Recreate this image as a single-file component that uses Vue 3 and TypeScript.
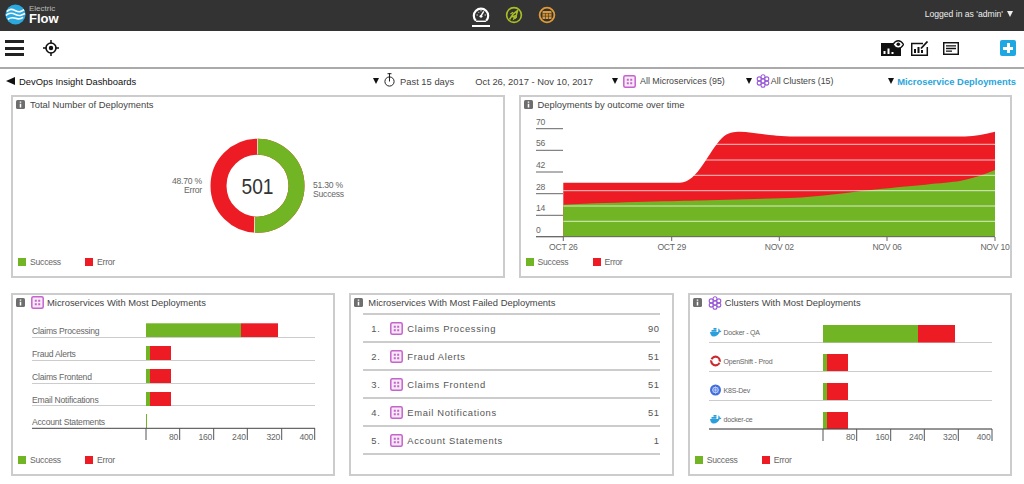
<script setup lang="ts">
interface BarRow { label: string; y0: number; y1: number; g: number; r: number; line: number; labelY: number; icon?: string }

const legendItems = [
  { name: 'Success', cls: 'ok' },
  { name: 'Error', cls: 'err' },
]

const yTicks = [
  { v: '70', y: 128.7 }, { v: '56', y: 150.3 }, { v: '42', y: 172 },
  { v: '28', y: 193.7 }, { v: '14', y: 215.3 }, { v: '0', y: 236.7 },
]
const gridY = [144.3, 160, 175.3, 190.7, 206, 221.3]
const xTicks = [
  { t: 'OCT 26', x: 563.3 }, { t: 'OCT 29', x: 671.7 }, { t: 'NOV 02', x: 779.3 },
  { t: 'NOV 06', x: 887 }, { t: 'NOV 10', x: 995 },
]

const msRows: BarRow[] = [
  { label: 'Claims Processing', y0: 323.3, y1: 337, g: 241, r: 278, line: 337.5, labelY: 334 },
  { label: 'Fraud Alerts', y0: 346, y1: 360, g: 150, r: 171, line: 360.5, labelY: 357 },
  { label: 'Claims Frontend', y0: 369, y1: 383, g: 150, r: 171, line: 383.5, labelY: 380 },
  { label: 'Email Notifications', y0: 392, y1: 406, g: 150, r: 171, line: 405.5, labelY: 403 },
]
const msTicks = [
  { t: '', x: 146 }, { t: '80', x: 179.7 }, { t: '160', x: 213.7 },
  { t: '240', x: 247.3 }, { t: '320', x: 281.7 }, { t: '400', x: 314.7 },
]
const clRows: BarRow[] = [
  { label: 'Docker - QA', y0: 325, y1: 342.5, g: 918, r: 955, line: 342.5, labelY: 334.5, icon: 'docker' },
  { label: 'OpenShift - Prod', y0: 354, y1: 371, g: 827, r: 848, line: 371.5, labelY: 363.5, icon: 'openshift' },
  { label: 'K8S-Dev', y0: 383, y1: 400, g: 827, r: 848, line: 400.5, labelY: 392.5, icon: 'k8s' },
  { label: 'docker-ce', y0: 412, y1: 429, g: 827, r: 848, line: 429, labelY: 421.5, icon: 'docker' },
]
const clTicks = [
  { t: '', x: 823 }, { t: '80', x: 856.7 }, { t: '160', x: 890.7 },
  { t: '240', x: 924.3 }, { t: '320', x: 958.3 }, { t: '400', x: 992 },
]
const failed = [
  { n: 1, name: 'Claims Processing', v: 90 },
  { n: 2, name: 'Fraud Alerts', v: 51 },
  { n: 3, name: 'Claims Frontend', v: 51 },
  { n: 4, name: 'Email Notifications', v: 51 },
  { n: 5, name: 'Account Statements', v: 1 },
]
</script>

<template>
  <div class="page">
    <header class="topbar">
      <div class="brand">
        <svg class="logo" viewBox="0 0 22 22" width="21" height="21">
          <circle cx="11" cy="11" r="10.5" fill="#29a9e0" />
          <path d="M2 8c3-3 5-3 9-1s6 1 9-1M1 12c3-3 6-3 10-1s6 1 10-1M3 16c3-2 5-2 8-1s5 1 8-1" fill="none" stroke="#fff" stroke-width="1.7" />
        </svg>
        <div class="brand-text"><span class="b1">Electric</span><span class="b2">Flow</span></div>
      </div>
      <nav class="nav">
        <div class="nav-item active">
          <svg viewBox="0 0 20 20" width="18" height="18">
            <path d="M4.300 16.500a8 8 0 1 1 11.400 0" fill="none" stroke="#fff" stroke-width="2.400" />
            <path d="M4.500 17h11" stroke="#fff" stroke-width="1.600" />
            <path d="M10 11l3-5" stroke="#fff" stroke-width="1.600" />
            <circle cx="10" cy="11.500" r="1.600" fill="#fff" />
            <path d="M5 10h1.500M14 10h1.500M6.800 6.500l1 1M10 4.500v1.500" stroke="#fff" stroke-width="1" />
          </svg>
        </div>
        <div class="nav-item">
          <svg viewBox="0 0 20 20" width="18" height="18">
            <circle cx="10" cy="10" r="8.200" fill="none" stroke="#a9bf22" stroke-width="1.800" />
            <path d="M5 15L9 9l5-4-1.500 5.500L8 12l3-1-1 3 3-2" fill="none" stroke="#a9bf22" stroke-width="1.700" />
            <path d="M6 9l3-2M11 14l2-3" stroke="#a9bf22" stroke-width="1.300" />
          </svg>
        </div>
        <div class="nav-item">
          <svg viewBox="0 0 20 20" width="18" height="18">
            <circle cx="10" cy="10" r="8.200" fill="none" stroke="#de9a36" stroke-width="2" />
            <rect x="5" y="5.500" width="10" height="9" rx="1" fill="#de9a36" />
            <path d="M5 8.500h10M5 11.300h10M8.300 8v6.500M11.700 8v6.500" stroke="#333" stroke-width=".7" />
          </svg>
        </div>
      </nav>
      <div class="user">Logged in as 'admin' <span class="user-caret"></span></div>
    </header>

    <div class="toolbar">
      <div class="hamb"><span></span><span></span><span></span></div>
      <svg class="target" viewBox="0 0 16 16" width="16" height="16">
        <circle cx="8" cy="8" r="5" fill="none" stroke="#111" stroke-width="1.600" />
        <circle cx="8" cy="8" r="2.200" fill="#111" />
        <path d="M8 0v3.500M8 12.500V16M0 8h3.500M12.500 8H16" stroke="#111" stroke-width="1.500" />
      </svg>
      <div class="tools">
        <svg class="t1" viewBox="0 0 23 16" width="23" height="16">
          <rect x="0" y="3" width="20" height="13" fill="#111" />
          <path d="M3.500 14v-3M7.500 14V8.500M11.500 14v-2" stroke="#fff" stroke-width="2" />
          <path d="M12 4.500c3-5 7.500-5 10.500 0-3 5-7.500 5-10.500 0z" fill="#fff" stroke="#111" stroke-width="1.300" />
          <circle cx="17.300" cy="4.300" r="1.800" fill="#111" />
        </svg>
        <svg class="t2" viewBox="0 0 18 15" width="18" height="15">
          <path d="M12 2.500H.7v11.800h15.600V6" fill="none" stroke="#111" stroke-width="1.500" />
          <path d="M4 12V8M7.500 12V6M11 12V9" stroke="#111" stroke-width="2" />
          <path d="M10 7.500L16.500.5" stroke="#111" stroke-width="1.800" />
        </svg>
        <svg class="t3" viewBox="0 0 16 13" width="16" height="13">
          <rect x=".7" y=".7" width="14.600" height="11.600" fill="none" stroke="#111" stroke-width="1.500" />
          <path d="M3 3.800h10M3 6.500h10M3 9.200h6" stroke="#111" stroke-width="1.300" />
        </svg>
        <div class="plus"><span class="ph"></span><span class="pv"></span></div>
      </div>
    </div>

    <div class="crumbs">
      <div class="back"><span class="tri-left"></span>DevOps Insight Dashboards</div>
      <div class="filters">
        <span class="caret"></span>
        <svg class="watch" viewBox="0 0 11 14" width="11" height="14">
          <circle cx="5.500" cy="8.500" r="4.600" fill="none" stroke="#222" stroke-width="1" />
          <path d="M5.500 0v8.500M3.500 .7h4" stroke="#222" stroke-width="1" />
        </svg>
        <span class="ftext past">Past 15 days</span>
        <span class="ftext date">Oct 26, 2017 - Nov 10, 2017</span>
        <span class="caret c2"></span>
        <svg class="ms-ico" viewBox="0 0 13 13" width="13" height="13">
          <rect x=".8" y=".8" width="11.400" height="11.400" rx="1.500" fill="#f7e9f8" stroke="#c564cb" stroke-width="1.500" />
          <path d="M3.800 3.800h2v2h-2zM7.200 3.800h2v2h-2zM3.800 7.200h2v2h-2zM7.200 7.200h2v2h-2z" fill="#c564cb" />
        </svg>
        <span class="ftext allms">All Microservices (95)</span>
        <span class="caret c3"></span>
        <svg class="cl-ico" viewBox="0 0 14 14" width="14" height="14">
          <g fill="none" stroke="#9a5bd6" stroke-width="1.100">
            <circle cx="7" cy="2.700" r="2" /><circle cx="3.200" cy="4.900" r="2" /><circle cx="10.800" cy="4.900" r="2" />
            <circle cx="3.200" cy="9.100" r="2" /><circle cx="10.800" cy="9.100" r="2" /><circle cx="7" cy="11.300" r="2" />
            <circle cx="7" cy="7" r="2" />
          </g>
        </svg>
        <span class="ftext allcl">All Clusters (15)</span>
      </div>
      <div class="dash"><span class="caret"></span><span class="dash-name">Microservice Deployments</span></div>
    </div>

    <main class="rows">
      <section class="row">
        <article class="card">
          <div class="card-head">
            <svg class="info" viewBox="0 0 9 9" width="9" height="9"><rect width="9" height="9" rx="1.500" fill="#6e6e6e" /><path d="M4.500 1.500v1.200M4.500 3.700v3.800" stroke="#fff" stroke-width="1.500" /></svg>
            <span class="title">Total Number of Deployments</span>
          </div>
          <svg class="chart" viewBox="13 112 490 144" width="490" height="144">
            <circle cx="257.500" cy="185.700" r="39" fill="none" stroke="#ed1c24" stroke-width="16" />
            <circle cx="257.500" cy="185.700" r="39" fill="none" stroke="#71b524" stroke-width="16" pathLength="100" stroke-dasharray="51.300 48.700" transform="rotate(-90 257.500 185.700)" />
            <path d="M257.500 138.400v16M254.500 217v16" stroke="#fff" stroke-width=".7" />
            <text class="big" x="241.500" y="193.500" textLength="32" lengthAdjust="spacingAndGlyphs">501</text>
            <text class="lbl" x="202" y="184" text-anchor="end">48.70 %</text>
            <text class="lbl" x="202" y="192.500" text-anchor="end">Error</text>
            <text class="lbl" x="313" y="188" >51.30 %</text>
            <text class="lbl" x="313" y="196.500">Success</text>
          </svg>
          <div class="legend">
            <span v-for="l in legendItems" :key="l.name" class="leg"><i :class="l.cls"></i>{{ l.name }}</span>
          </div>
        </article>

        <article class="card">
          <div class="card-head">
            <svg class="info" viewBox="0 0 9 9" width="9" height="9"><rect width="9" height="9" rx="1.500" fill="#6e6e6e" /><path d="M4.500 1.500v1.200M4.500 3.700v3.800" stroke="#fff" stroke-width="1.500" /></svg>
            <span class="title">Deployments by outcome over time</span>
          </div>
          <svg class="chart" viewBox="521 112 489 144" width="489" height="144">
            <path d="M563.300 182.700L680 182.700C698 182 708 152 722 138C728 132 734 131.700 740 131.700C755 132 770 136.500 795 136.500L965 136.500C975 136.500 985 134 995 131.700L995 237L563.300 237Z" fill="#ed1c24" />
            <path d="M563.300 204.700C620 202 680 201 700 200.500L790 198C820 197 850 192 880 189C910 186 945 183 960 181C975 178 985 174 995 170L995 237L563.300 237Z" fill="#71b524" />
            <line v-for="y in gridY" :key="y" x1="563.300" x2="995" :y1="y" :y2="y" stroke="#fff" stroke-opacity=".75" stroke-width="1" />
            <g v-for="t in yTicks" :key="t.v">
              <line x1="536" x2="563" :y1="t.y" :y2="t.y" stroke="#666" stroke-width="1" />
              <text class="lbl" x="536" :y="t.v === '0' ? 233 : t.y - 4">{{ t.v }}</text>
            </g>
            <line x1="536" x2="995" y1="236.700" y2="236.700" stroke="#666" stroke-width="1" />
            <g v-for="t in xTicks" :key="t.t">
              <line :x1="t.x" :x2="t.x" y1="237" y2="241" stroke="#666" stroke-width="1" />
              <text class="lbl" :x="t.x" y="250" text-anchor="middle">{{ t.t }}</text>
            </g>
          </svg>
          <div class="legend">
            <span v-for="l in legendItems" :key="l.name" class="leg"><i :class="l.cls"></i>{{ l.name }}</span>
          </div>
        </article>
      </section>

      <section class="row">
        <article class="card">
          <div class="card-head">
            <svg class="info" viewBox="0 0 9 9" width="9" height="9"><rect width="9" height="9" rx="1.500" fill="#6e6e6e" /><path d="M4.500 1.500v1.200M4.500 3.700v3.800" stroke="#fff" stroke-width="1.500" /></svg>
            <svg class="ms-ico head-ico" viewBox="0 0 13 13" width="13" height="13">
              <rect x=".8" y=".8" width="11.400" height="11.400" rx="1.500" fill="#f7e9f8" stroke="#c564cb" stroke-width="1.500" />
              <path d="M3.800 3.800h2v2h-2zM7.200 3.800h2v2h-2zM3.800 7.200h2v2h-2zM7.200 7.200h2v2h-2z" fill="#c564cb" />
            </svg>
            <span class="title">Microservices With Most Deployments</span>
          </div>
          <svg class="chart" viewBox="13 310 320 144" width="320" height="144">
            <g v-for="r in msRows" :key="r.label">
              <line x1="32" x2="315" :y1="r.line" :y2="r.line" stroke="#ccc" stroke-width="1" />
              <rect x="146" :y="r.y0" :width="r.g - 146" :height="r.y1 - r.y0" fill="#71b524" />
              <rect :x="r.g" :y="r.y0" :width="r.r - r.g" :height="r.y1 - r.y0" fill="#ed1c24" />
              <text class="lbl" x="32" :y="r.labelY">{{ r.label }}</text>
            </g>
            <text class="lbl" x="32" y="425">Account Statements</text>
            <rect x="146" y="414" width="1" height="14" fill="#71b524" />
            <line x1="32" x2="315" y1="428.300" y2="428.300" stroke="#444" stroke-width="1" />
            <g v-for="t in msTicks" :key="t.x">
              <line :x1="t.x" :x2="t.x" y1="428" y2="440" stroke="#555" stroke-width="1" />
              <text class="lbl" :x="t.x - 1.500" y="440" text-anchor="end">{{ t.t }}</text>
            </g>
          </svg>
          <div class="legend">
            <span v-for="l in legendItems" :key="l.name" class="leg"><i :class="l.cls"></i>{{ l.name }}</span>
          </div>
        </article>

        <article class="card">
          <div class="card-head">
            <svg class="info" viewBox="0 0 9 9" width="9" height="9"><rect width="9" height="9" rx="1.500" fill="#6e6e6e" /><path d="M4.500 1.500v1.200M4.500 3.700v3.800" stroke="#fff" stroke-width="1.500" /></svg>
            <span class="title">Microservices With Most Failed Deployments</span>
          </div>
          <ol class="list">
            <li v-for="f in failed" :key="f.n" class="item">
              <span class="num">{{ f.n }}.</span>
              <svg class="ms-ico" viewBox="0 0 13 13" width="13" height="13">
                <rect x=".8" y=".8" width="11.400" height="11.400" rx="1.500" fill="#f7e9f8" stroke="#c564cb" stroke-width="1.500" />
                <path d="M3.800 3.800h2v2h-2zM7.200 3.800h2v2h-2zM3.800 7.200h2v2h-2zM7.200 7.200h2v2h-2z" fill="#c564cb" />
              </svg>
              <span class="name">{{ f.name }}</span>
              <span class="val">{{ f.v }}</span>
            </li>
          </ol>
        </article>

        <article class="card">
          <div class="card-head">
            <svg class="info" viewBox="0 0 9 9" width="9" height="9"><rect width="9" height="9" rx="1.500" fill="#6e6e6e" /><path d="M4.500 1.500v1.200M4.500 3.700v3.800" stroke="#fff" stroke-width="1.500" /></svg>
            <svg class="cl-ico head-ico" viewBox="0 0 14 14" width="14" height="14">
              <g fill="none" stroke="#9a5bd6" stroke-width="1.100">
                <circle cx="7" cy="2.700" r="2" /><circle cx="3.200" cy="4.900" r="2" /><circle cx="10.800" cy="4.900" r="2" />
                <circle cx="3.200" cy="9.100" r="2" /><circle cx="10.800" cy="9.100" r="2" /><circle cx="7" cy="11.300" r="2" />
                <circle cx="7" cy="7" r="2" />
              </g>
            </svg>
            <span class="title">Clusters With Most Deployments</span>
          </div>
          <svg class="chart" viewBox="690 310 320 144" width="320" height="144">
            <g v-for="r in clRows" :key="r.label">
              <line x1="709" x2="992" :y1="r.line" :y2="r.line" stroke="#ccc" stroke-width="1" />
              <rect x="823" :y="r.y0" :width="r.g - 823" :height="r.y1 - r.y0" fill="#71b524" />
              <rect :x="r.g" :y="r.y0" :width="r.r - r.g" :height="r.y1 - r.y0" fill="#ed1c24" />
              <text class="lbl small" x="723.500" :y="r.labelY">{{ r.label }}</text>
              <g :transform="`translate(710 ${r.labelY - 8})`">
                <template v-if="r.icon === 'docker'">
                  <path d="M0 5.500h8c.5-1 .5-2.500 0-3.500l1.200.6c.4.5.6 1 .7 1.700 .7-.2 1.300-.1 1.600.2-.4.900-1.200 1.300-2 1.300C8.500 8.500 6.500 10 3.500 10 1.500 10 .3 8 0 5.500z" fill="#2a9fdb" />
                  <path d="M1.500 3.500h5v1.800h-5zM3.500 1.500h3v1.800h-3z" fill="#2a9fdb" />
                </template>
                <template v-else-if="r.icon === 'openshift'">
                  <circle cx="5.500" cy="5.500" r="4.300" fill="none" stroke="#cc2a2f" stroke-width="2.200" />
                  <path d="M-.5 3.500L3 5M8 6l3.500 1.500" stroke="#fff" stroke-width="1.300" />
                </template>
                <template v-else>
                  <circle cx="5.500" cy="5.500" r="5.500" fill="#3f6ee0" />
                  <circle cx="5.500" cy="5.500" r="2.800" fill="none" stroke="#cfd9f8" stroke-width=".9" />
                  <path d="M5.500 1.800v7.400M2 5.500h7M3 3l5 5M8 3l-5 5" stroke="#cfd9f8" stroke-width=".6" />
                </template>
              </g>
            </g>
            <line x1="709" x2="992" y1="429" y2="429" stroke="#444" stroke-width="1" />
            <g v-for="t in clTicks" :key="t.x">
              <line :x1="t.x" :x2="t.x" y1="429" y2="441" stroke="#555" stroke-width="1" />
              <text class="lbl" :x="t.x - 1.500" y="440" text-anchor="end">{{ t.t }}</text>
            </g>
          </svg>
          <div class="legend">
            <span v-for="l in legendItems" :key="l.name" class="leg"><i :class="l.cls"></i>{{ l.name }}</span>
          </div>
        </article>
      </section>
    </main>
  </div>
</template>

<style>
html, body { margin: 0; background: #fff; }
</style>

<style scoped>
.page { width: 1024px; height: 484px; overflow: hidden; font-family: "Liberation Sans", Arial, sans-serif; color: #333; background: #fff; }
.topbar { height: 31px; background: #333; display: grid; grid-template-columns: 1fr auto 1fr; align-items: center; padding: 0 11px 0 5px; box-sizing: border-box; width: 1024px; }
.brand { display: flex; align-items: center; gap: 3px; }
.logo { display: block; margin-bottom: 3px; }
.brand-text { display: flex; flex-direction: column; line-height: 1; margin-bottom: 2px; }
.b1 { font-size: 8px; color: #bbb; line-height: 8px; }
.b2 { font-size: 13px; font-weight: 700; color: #fff; line-height: 12px; }
.nav { display: flex; gap: 15px; margin-left: 10px; }
.nav-item { height: 31px; width: 18px; display: flex; align-items: flex-start; padding-top: 6px; box-sizing: border-box; position: relative; }
.nav-item svg { display: block; }
.nav-item.active::after { content: ""; position: absolute; left: 0; right: 0; top: 25px; height: 2px; background: #fff; }
.user { justify-self: end; font-size: 8.600px; color: #eee; display: flex; align-items: center; gap: 4px; margin-bottom: 3px; }
.user-caret { width: 0; height: 0; border-left: 3.500px solid transparent; border-right: 3.500px solid transparent; border-top: 6px solid #eee; }

.toolbar { height: 38px; border-bottom: 2px solid #aaa; box-sizing: border-box; display: flex; align-items: center; padding: 0 8px 2px 5px; }
.hamb { display: flex; flex-direction: column; gap: 3.500px; width: 19px; }
.hamb span { height: 3px; background: #222; display: block; }
.target { margin-left: 19px; display: block; }
.tools { margin-left: auto; display: flex; align-items: center; }
.t1 { display: block; }
.t2 { display: block; margin-left: 7px; }
.t3 { display: block; margin-left: 14px; }
.plus { width: 16px; height: 16px; border-radius: 2px; background: #1ea7e1; margin-left: 41px; position: relative; }
.ph, .pv { position: absolute; background: #fff; }
.ph { left: 3px; right: 3px; top: 6.500px; height: 3px; }
.pv { top: 3px; bottom: 3px; left: 6.500px; width: 3px; }

.crumbs { height: 26px; display: flex; align-items: center; padding: 0 8px 2px 6px; font-size: 9.400px; box-sizing: border-box; }
.back { color: #111; display: flex; align-items: center; width: 367px; flex: none; }
.tri-left { width: 0; height: 0; border-top: 4.500px solid transparent; border-bottom: 4.500px solid transparent; border-right: 9px solid #111; margin-right: 4px; }
.filters { display: flex; align-items: center; color: #444; flex: none; }
.caret { display: inline-block; width: 0; height: 0; border-left: 3.500px solid transparent; border-right: 3.500px solid transparent; border-top: 6px solid #111; }
.watch { display: block; margin-left: 5px; margin-bottom: 2px; }
.ftext { white-space: nowrap; }
.past { margin-left: 5px; }
.date { margin-left: 21px; }
.c2 { margin-left: 19px; border-left-width: 3px; border-right-width: 3px; }
.filters > .ms-ico { margin-left: 5px; display: block; }
.allms { margin-left: 4px; font-size: 8.900px; }
.c3 { margin-left: 21px; border-left-width: 3px; border-right-width: 3px; }
.filters > .cl-ico { margin-left: 4px; display: block; }
.allcl { margin-left: 1px; font-size: 8.800px; }
.dash { margin-left: auto; display: flex; align-items: center; gap: 3px; }
.dash-name { color: #29a5dc; font-weight: 700; font-size: 9.400px; white-space: nowrap; }

.rows { display: flex; flex-direction: column; gap: 15px; padding: 0 12px 0 11px; }
.row { display: flex; gap: 14px; }
.card { flex: 1 1 0; min-width: 0; height: 183px; border: 2px solid #ccc; box-sizing: border-box; display: flex; flex-direction: column; }
.card-head { height: 15px; display: flex; align-items: center; padding-left: 3px; flex: none; }
.info { display: block; flex: none; }
.head-ico { margin-left: 6px; margin-right: -2px; }
.title { font-size: 9.400px; color: #444; margin-left: 5px; white-space: nowrap; }
.chart { display: block; flex: none; }
.big { font-size: 22px; fill: #333; font-family: "Liberation Sans", Arial, sans-serif; }
.lbl { font-size: 8.600px; letter-spacing: -.22px; fill: #666; font-family: "Liberation Sans", Arial, sans-serif; }
.lbl.small { font-size: 7px; letter-spacing: -.2px; }
.legend { height: 12px; display: flex; align-items: center; padding-left: 5px; font-size: 8.600px; letter-spacing: -.22px; color: #666; flex: none; }
.leg { display: flex; align-items: center; width: 67px; }
.leg i { width: 8px; height: 8px; margin-right: 4px; display: block; }
.ok { background: #71b524; }
.err { background: #ed1c24; }

.list { list-style: none; margin: 3px 12px 0 12px; padding: 0; border-top: 2px solid #ccc; }
.item { height: 28px; box-sizing: border-box; border-bottom: 2px solid #ccc; display: flex; align-items: center; font-size: 9.400px; letter-spacing: .65px; color: #555; }
.num { width: 19px; padding-left: 8px; flex: none; box-sizing: content-box; }
.item .ms-ico { display: block; flex: none; }
.name { margin-left: 4px; }
.val { margin-left: auto; }
</style>
